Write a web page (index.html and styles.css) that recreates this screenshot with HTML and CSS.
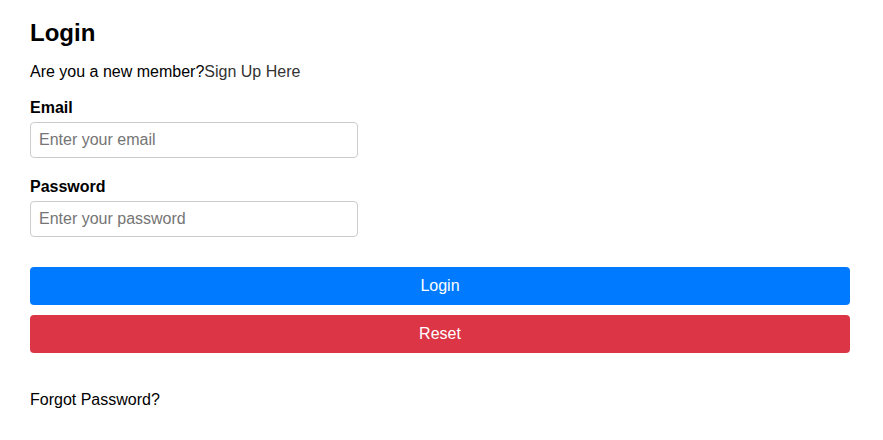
FILE: index.html
```html
<!DOCTYPE html>
<html>
<head>
<meta charset="utf-8">
<link rel="stylesheet" href="styles.css">
</head>
<body>
<div class="container">
  <h2 class="title">Login</h2>
  <p class="intro">Are you a new member?<a class="signup" href="#">Sign Up Here</a></p>
  <form class="form">
    <div class="field">
      <label class="label">Email</label>
      <input class="input" type="email" placeholder="Enter your email">
    </div>
    <div class="field">
      <label class="label">Password</label>
      <input class="input" type="password" placeholder="Enter your password">
    </div>
    <button type="button" class="btn btn-login">Login</button>
    <button type="button" class="btn btn-reset">Reset</button>
  </form>
  <p class="forgot">Forgot Password?</p>
</div>
</body>
</html>
```
FILE: styles.css
```css
html, body {
  margin: 0;
  padding: 0;
  background: #fff;
}
body {
  font-family: "Liberation Sans", Arial, sans-serif;
  font-size: 16px;
  color: #000;
}
.container {
  width: 820px;
  padding: 19px 30px;
}
.title {
  font-size: 24px;
  font-weight: bold;
  margin: 0 0 16px;
  line-height: 28px;
}
.intro {
  margin: 0 0 18px;
  line-height: 18px;
}
.signup {
  color: #333;
  text-decoration: none;
}
.form {
  display: flex;
  flex-direction: column;
}
.field {
  display: flex;
  flex-direction: column;
  margin-bottom: 20px;
}
.label {
  font-weight: bold;
  line-height: 18px;
  margin-bottom: 5px;
}
.input {
  width: 40%;
  box-sizing: border-box;
  height: 36px;
  padding: 8px;
  border: 1px solid #ccc;
  border-radius: 4px;
  font-family: "Liberation Sans", Arial, sans-serif;
  font-size: 16px;
  color: #000;
}
.input::placeholder {
  color: #757575;
}
.btn {
  width: 100%;
  height: 38px;
  border: none;
  border-radius: 4px;
  color: #fff;
  font-family: "Liberation Sans", Arial, sans-serif;
  font-size: 16px;
  margin-bottom: 10px;
}
.btn-login {
  background: #007bff;
  margin-top: 10px;
}
.btn-reset {
  background: #dc3545;
}
.forgot {
  margin: 28px 0 0;
  line-height: 18px;
}
```
